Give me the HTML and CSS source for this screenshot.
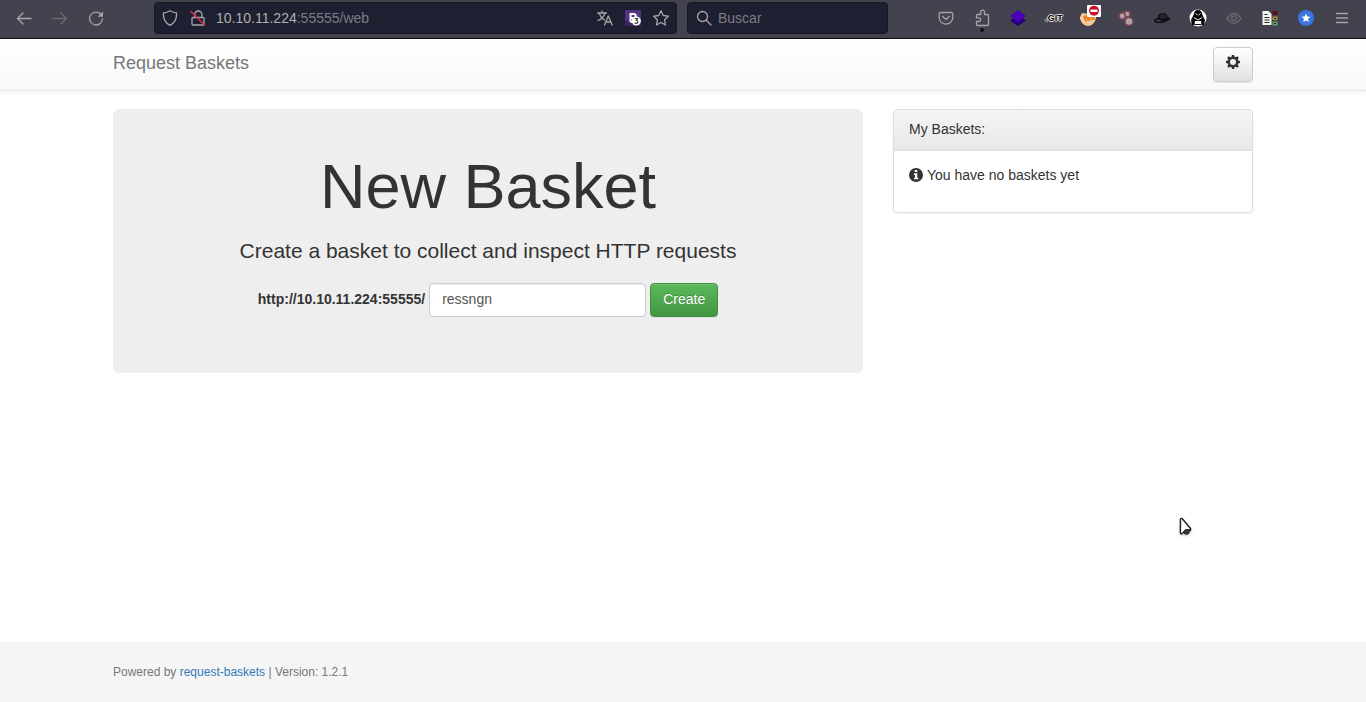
FILE: index.html
```html
<!DOCTYPE html>
<html lang="en">
<head>
<meta charset="utf-8">
<meta name="viewport" content="width=device-width, initial-scale=1">
<title>Request Baskets</title>
<link rel="stylesheet" href="styles.css">
</head>
<body>
<header class="toolbar">
  <div class="nav-tools">
    <button class="tool" aria-label="Back"><svg class="line" width="16" height="16" viewBox="0 0 16 16"><path d="M15 8.500H1.500M7 3 1.500 8.500 7 14"/></svg></button>
    <button class="tool dim" aria-label="Forward" disabled><svg class="line" width="16" height="16" viewBox="0 0 16 16"><path d="M1 8.500h13.500M9 3l5.500 5.500L9 14"/></svg></button>
    <button class="tool" aria-label="Reload"><svg class="line" width="16" height="16" viewBox="0 0 16 16"><path d="M12.800 4.300A6.400 6.400 0 1 0 14.400 9"/><path class="solid" d="M15 1.500v5.200H9.800z"/></svg></button>
  </div>
  <div class="address">
    <button class="mini" aria-label="Tracking protection"><svg class="line" width="16" height="16" viewBox="0 0 16 16"><path d="M8 .7c2 1.300 4 2 6.500 2.200.4 5.500-1.500 10-6.500 12.400C3 12.900 1.100 8.400 1.500 2.900 4 2.700 6 2 8 .7z"/></svg></button>
    <button class="mini" aria-label="Connection not secure"><svg class="line" width="16" height="16" viewBox="0 0 16 16"><path d="M3 7.500h10a1 1 0 0 1 1 1V14a1 1 0 0 1-1 1H3a1 1 0 0 1-1-1V8.500a1 1 0 0 1 1-1zM4.700 7.500V4.600a3.600 3.600 0 0 1 7.200 0v2.900"/><path class="red" d="m1 1.500 13.500 13.500"/></svg></button>
    <div class="url" role="textbox" aria-label="Address" tabindex="0"><span class="host">10.10.11.224</span>:55555/web</div>
    <button class="mini" aria-label="Translate"><svg class="line" width="16" height="16" viewBox="0 0 16 16"><path d="M.5 3h9M5 1v2M8 3C7 6.500 4 9.500 1 10.500M2.500 4c1 3 3 5 5 6M7.500 15 11.300 6l3.900 9M8.800 12h5.100"/></svg></button>
    <button class="mini" aria-label="Container"><svg width="16" height="16" viewBox="0 0 16 16"><rect width="16" height="16" rx="1" fill="#563282"/><path d="M0 11h16v4a1 1 0 0 1-1 1H1a1 1 0 0 1-1-1z" fill="#3d235f"/><path d="M5.500 12V4h3.200a2 2 0 0 1 0 4H5.500m3 0a2 2 0 0 1 0 4h-3" fill="none" stroke="#fff" stroke-width="2"/><circle cx="11.300" cy="11" r="4.600" fill="#fff"/><path d="M9.800 8.500h2.900L11.300 10.400c2.300 0 2 3-.1 3-.7 0-1.200-.2-1.500-.6" fill="none" stroke="#333" stroke-width="1.100"/></svg></button>
    <button class="mini" aria-label="Bookmark"><svg class="line" width="16" height="16" viewBox="0 0 16 16"><path d="m8 .8 2.200 4.700 5.100.7-3.700 3.600.9 5.200L8 12.500 3.500 15l.9-5.200L.7 6.200l5.100-.7z"/></svg></button>
  </div>
  <label class="search">
    <svg class="line" width="16" height="16" viewBox="0 0 16 16"><circle cx="6.500" cy="6.500" r="5"/><path d="m10.300 10.300 4.700 4.700"/></svg>
    <input type="search" placeholder="Buscar" aria-label="Buscar">
  </label>
  <div class="extensions">
    <button class="tool" aria-label="Pocket"><svg class="line" width="16" height="16" viewBox="0 0 16 16"><path d="M2.500 2.500h11a1.300 1.300 0 0 1 1.300 1.300v3.500a6.800 6.800 0 0 1-13.600 0V3.800a1.300 1.300 0 0 1 1.300-1.300zM4.500 6.300 8 9.500l3.500-3.200"/></svg></button>
    <button class="tool" aria-label="Extensions"><svg class="line" width="16" height="28" viewBox="0 0 16 28"><path d="M3.500 10.500h3.200V8a1.900 1.900 0 0 1 3.800 0v2.500h3a1 1 0 0 1 1 1v9a1 1 0 0 1-1 1h-10a1 1 0 0 1-1-1v-3H5a1.800 1.800 0 0 0 0-3.600H2.500v-2.400a1 1 0 0 1 1-1z"/><circle class="dot" cx="8" cy="26" r="2"/></svg></button>
    <button class="tool" aria-label="Layers"><svg width="18" height="18" viewBox="0 0 18 18"><path d="m9 6 8 5.500L9 17 1 11.500z" fill="#220078"/><path d="m9 1 8 6-8 6.500L1 7z" fill="#4a00b4"/></svg></button>
    <button class="tool" aria-label="Git"><span class="git">.GIT</span></button>
    <button class="tool" aria-label="Cookies"><svg width="22" height="26" viewBox="0 4 22 26"><path d="M1 16 3 12l14 2c.5 6-3 10.500-8 11C5 25 1 21 1 16z" fill="#f3c99c"/><path d="m4 15 10-2 2 6-10 3z" fill="#e88222"/><path d="m1 17 5 4 9-1.500M7 18l1 1m3-2 1.500 1" fill="none" stroke="#fbe3bf"/><rect x="8" y="4" width="14" height="12" rx="1" fill="#fff"/><circle cx="15" cy="9.700" r="5" fill="#c8102e"/><path fill="#fff" d="M11.500 8.600h7v2.400h-7z"/></svg></button>
    <button class="tool" aria-label="Dots"><svg width="18" height="18" viewBox="0 0 18 18" fill="#b0a0a8" stroke="#7d4352" stroke-width="1.500"><circle cx="10" cy="5" r="3"/><circle cx="5.200" cy="7" r="3.200"/><circle cx="12" cy="12.500" r="4"/></svg></button>
    <button class="tool" aria-label="Hat"><svg width="18" height="18" viewBox="0 0 18 18"><path d="M5.500 9.500 6 5.800c1-1.500 6.500-1.500 7.500 0l.8 4c-2.500 1.300-6.300 1.200-8.800-.3z" fill="#24242b" stroke="#0b0b0e"/><path d="M5.500 9.500c2.500 1.600 6.500 1.600 9 .3" fill="none" stroke="#08080a" stroke-width="1.800"/><path d="M5 9.500c-3 .5-4.500 2.500-2 3.500 4 1 10-.2 13-2.500.8-.9.300-1.700-1.500-1.800" fill="none" stroke="#0b0b0e" stroke-width="1.300"/></svg></button>
    <button class="tool" aria-label="Hooded figure"><svg width="18" height="18" viewBox="0 0 18 18"><circle cx="9" cy="9" r="8.500" fill="#fff"/><path d="M9 1C6 1 5 3 4.500 6L2 11l1 5h2.500l.5-4h6l.5 4H15l1-5-2.500-5C13 3 12 1 9 1z" fill="#080808"/><path d="M6.500 4.500 8.500 6m3-1.500L9.500 6M5 8.500 9 11l4-2.500" fill="none" stroke="#fff" stroke-width=".9"/><path d="M7 13.500h4v1.500H7z" fill="#fff"/><path d="M6 15.500h6" stroke="#080808"/></svg></button>
    <button class="tool faint" aria-label="Watch"><svg class="line" width="16" height="16" viewBox="0 0 16 16"><path d="M1 8.500C3.500 5 6 3.500 8 3.500s4.500 1.500 7 5c-2.500 3.300-5 4.500-7 4.500s-4.500-1.200-7-4.500z"/><circle cx="8" cy="8.200" r="2.400"/></svg></button>
    <button class="tool" aria-label="Document"><svg width="18" height="18" viewBox="0 0 18 18"><path d="M1.500 2h6l3 3v11h-9z" fill="#f3f3ef"/><path d="M3.500 5.500h3M3.500 8.500h5M3.500 11h5M3.500 13.500h5" stroke="#222"/><path d="M11.500 2h5v4h-5z" fill="#650d15"/><path d="M11.500 7.500h5v3.500h-5z" fill="#b68a3c"/><path d="M11.500 12.500h5v4h-5z" fill="#5aa45d"/><path d="M13 4h2m-2 5.500h2m-2 5h2" stroke="#302626"/></svg></button>
    <button class="tool" aria-label="Favourites"><svg width="16" height="16" viewBox="0 0 16 16"><circle cx="8" cy="8" r="8" fill="#3c74df"/><path d="m8 3.500 1.300 2.900 3.200.3-2.400 2.100.7 3.200L8 10.400 5.200 12l.7-3.200-2.400-2.100 3.200-.3z" fill="#fff"/></svg></button>
    <button class="tool" aria-label="Menu"><svg class="line" width="16" height="16" viewBox="0 0 16 16"><path d="M2.500 3.500h11M2.500 8h11M2.500 12.500h11"/></svg></button>
  </div>
</header>

<nav class="navbar">
  <div class="container bar">
    <a class="brand" href="#">Request Baskets</a>
    <button class="settings" aria-label="Settings"><svg width="14" height="14" viewBox="0 0 14 14"><path fill="#333" fill-rule="evenodd" d="M5.900 0h2.200l.4 1.800 1.200.5 1.600-1 1.500 1.500-1 1.600.5 1.200 1.700.3v2.200l-1.700.4-.5 1.200 1 1.600-1.500 1.500-1.600-1-1.200.5L8.100 14H5.900l-.4-1.700-1.200-.5-1.600 1-1.500-1.500 1-1.600-.5-1.200L0 8.100V5.900l1.700-.3.5-1.200-1-1.600 1.500-1.500 1.600 1 1.200-.5zM7 4a3 3 0 1 0 0 6 3 3 0 0 0 0-6z"/></svg></button>
  </div>
</nav>

<main class="container columns">
  <section class="jumbotron">
    <h1>New Basket</h1>
    <p>Create a basket to collect and inspect HTTP requests</p>
    <form class="create">
      <label for="basket">http://10.10.11.224:55555/</label>
      <input id="basket" type="text" value="ressngn">
      <button type="button">Create</button>
    </form>
  </section>
  <aside class="panel">
    <h2>My Baskets:</h2>
    <p><svg width="14" height="14" viewBox="0 0 14 14"><circle cx="7" cy="7" r="7" fill="#333"/><path fill="#fff" d="M5.700 2h2.600v2H5.700zM5 5.300h3.300v4.400H9.400v1.600H5V9.700h1V6.900H5z"/></svg>You have no baskets yet</p>
  </aside>
</main>

<footer class="footer">
  <div class="container">Powered by <a href="#">request-baskets</a> | Version: 1.2.1</div>
</footer>

<svg class="pointer" width="16" height="20" viewBox="0 0 16 20" aria-hidden="true"><path d="M2.500 2.200c.3-1 1.400-1 2-.2l8 9.500c.5.900 0 1.700-.9 1.800l-4.500.6-3 2.600c-.8.500-1.700.1-1.700-.8z" fill="#fff" stroke="#222" stroke-width="1.400"/><path d="m5.500 15 2-2.500 5 .5-2.500 4H7z" fill="#3b3b3b" stroke="#222"/></svg>
</body>
</html>
```

FILE: styles.css
```css
* { box-sizing: border-box; }

body {
  margin: 0;
  min-height: 100vh;
  display: flex;
  flex-direction: column;
  background: #fff;
  color: #333;
  font: 14px/20px "Liberation Sans", Arial, sans-serif;
}

button, input { font: inherit; }
a { color: #337ab7; text-decoration: none; }

/* Browser toolbar */
.toolbar {
  display: flex;
  align-items: flex-start;
  height: 39px;
  padding: 0 6px;
  background: #42434f;
  border-bottom: 1px solid #0e0d16;
  color: #a6a6a6;
}
.nav-tools, .extensions { display: flex; flex: none; }
.nav-tools { margin-right: 40px; }
.extensions { margin-left: auto; }

.tool, .mini {
  display: flex;
  align-items: center;
  justify-content: center;
  flex: none;
  padding: 0;
  border: 0;
  background: none;
  color: inherit;
}
.tool { width: 36px; height: 36px; }
.mini { width: 28px; height: 32px; }
.dim { color: #6b6a74; }
.faint { color: #696872; }

.line { fill: none; stroke: currentColor; stroke-width: 1.3; stroke-linejoin: round; stroke-linecap: round; }
.line .solid { fill: currentColor; stroke: none; }
.line .red { stroke: #e22850; stroke-width: 1.5; }
.line .dot { fill: #15141a; stroke: none; }

.address, .search {
  display: flex;
  align-items: center;
  height: 32px;
  margin-top: 2px;
  border: 1px solid #171824;
  border-radius: 4px;
  background: #1e2031;
}
.address { flex: 0 1 523px; min-width: 0; padding: 0 1px; }
.url { flex: 1; min-width: 0; margin-left: 4px; overflow: hidden; white-space: nowrap; color: #7c7d84; }
.host { color: #b0b0b0; }
.search { flex: 0 1 201px; min-width: 0; margin-left: 10px; padding: 0 8px; gap: 6px; }
.search svg { flex: none; }
.search input { width: 100%; min-width: 0; padding: 0; border: 0; outline: 0; background: none; color: #b0b0b0; }
.search input::placeholder { color: #7c7d84; opacity: 1; }

.git {
  color: #111;
  font-size: 9px;
  font-weight: bold;
  line-height: 12px;
  text-shadow: 1px 0 #ddd, -1px 0 #ddd, 0 1px #ddd, 0 -1px #ddd;
}

/* Page */
.container { width: 100%; max-width: 1170px; margin: 0 auto; padding: 0 15px; }

.navbar {
  background: linear-gradient(#fff, #f8f8f8);
  border-bottom: 1px solid #e7e7e7;
  box-shadow: 0 1px 5px rgba(0, 0, 0, .075);
}
.bar { display: flex; justify-content: space-between; padding-top: 8px; padding-bottom: 8px; }
.brand { padding: 6px 0; color: #777; font-size: 18px; }
.settings {
  display: flex;
  justify-content: center;
  width: 40px;
  height: 35px;
  padding: 7px 0;
  border: 1px solid #ccc;
  border-radius: 4px;
  background: linear-gradient(#fff, #e0e0e0);
  box-shadow: inset 0 1px rgba(255, 255, 255, .15), 0 1px 1px rgba(0, 0, 0, .075);
}

.columns {
  display: grid;
  grid-template-columns: minmax(0, 25fr) minmax(0, 12fr);
  align-items: start;
  gap: 30px;
  margin-top: 18px;
  margin-bottom: 20px;
}
.jumbotron { padding: 43px 60px 56px; border-radius: 6px; background: #eee; text-align: center; }
.jumbotron h1 { margin: 0 0 15px; font-size: 63px; font-weight: 500; line-height: 69px; }
.jumbotron p { margin: 0 0 17px; font-size: 21px; line-height: 30px; }

.create { display: flex; flex-wrap: wrap; align-items: center; justify-content: center; gap: 4px; }
.create label { padding-bottom: 2px; font-weight: bold; }
.create input {
  width: 217px;
  height: 34px;
  padding: 5px 12px 7px;
  border: 1px solid #ccc;
  border-radius: 4px;
  background: #fff;
  box-shadow: inset 0 1px 1px rgba(0, 0, 0, .075);
  color: #555;
}
.create button {
  height: 34px;
  padding: 5px 12px 7px;
  border: 1px solid #3e8f3e;
  border-radius: 4px;
  background: linear-gradient(#5cb85c, #419641);
  box-shadow: inset 0 1px rgba(255, 255, 255, .15), 0 1px 1px rgba(0, 0, 0, .075);
  color: #fff;
  text-shadow: 0 -1px rgba(0, 0, 0, .2);
}

.panel { border: 1px solid #ddd; border-radius: 4px; box-shadow: 0 1px 2px rgba(0, 0, 0, .05); }
.panel h2 {
  margin: 0;
  padding: 9px 15px 11px;
  border-bottom: 1px solid #ddd;
  border-radius: 3px 3px 0 0;
  background: linear-gradient(#f5f5f5, #e8e8e8);
  font-size: 14px;
  font-weight: 500;
  line-height: 20px;
}
.panel p { display: flex; align-items: center; gap: 4px; margin: 0; padding: 14px 15px 27px; }

.footer { margin-top: auto; padding: 20px 0; background: #f5f5f5; color: #777; font-size: 12px; }

/* Mouse pointer floating over the page */
.pointer { position: absolute; left: 1178px; top: 517px; filter: drop-shadow(0 1px 1px rgba(0, 0, 0, .3)); }
```
